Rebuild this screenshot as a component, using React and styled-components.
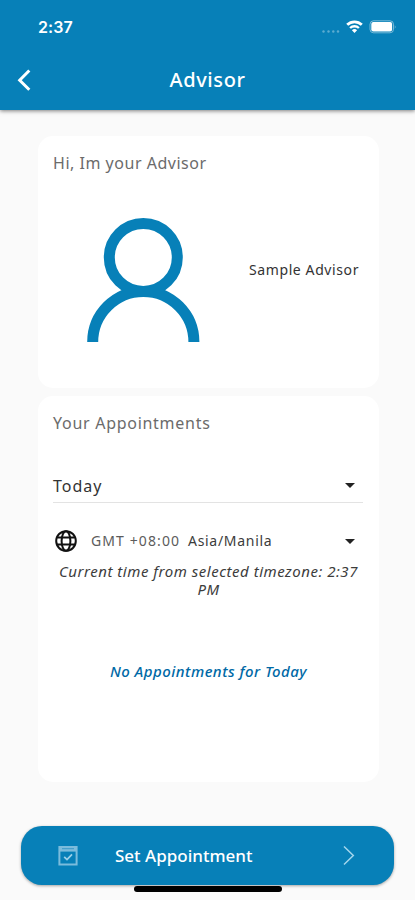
import React from "react";
import styled, { createGlobalStyle } from "styled-components";

const BLUE = "#0780b8";

const GlobalStyle = createGlobalStyle`
  * { box-sizing: border-box; }
  html, body { margin: 0; padding: 0; }
  body { background: #fafafa; font-family: "Noto Sans", "Open Sans", sans-serif; overflow: hidden; }
`;

const Screen = styled.div`
  width: 415px;
  height: 900px;
  display: flex;
  flex-direction: column;
  background: #fafafa;
`;

const Header = styled.header`
  height: 110px;
  flex: none;
  background: ${BLUE};
  color: #fff;
  box-shadow: 0 1px 4px rgba(0, 0, 0, 0.5);
`;

const StatusBar = styled.div`
  height: 53px;
  padding: 0 18px 0 38px;
  display: flex;
  align-items: center;
  justify-content: space-between;
`;

const Clock = styled.span`
  font: 600 16px/20px "Inter", sans-serif;
  letter-spacing: ${(p) => p.$spacing};
`;

const StatusIcons = styled.svg`
  display: block;
  width: 76px;
  height: 20px;
`;

const NavBar = styled.div`
  height: 54px;
  display: grid;
  grid-template-columns: 48px 1fr 48px;
  align-items: center;
`;

const BackButton = styled.button`
  border: 0;
  background: none;
  padding: 0 0 0 16px;
  height: 24px;
`;

const Icon = styled.svg`
  display: block;
  flex: none;
  width: ${(p) => p.$w}px;
  height: ${(p) => p.$h}px;
`;

const Title = styled.h1`
  margin: 0;
  text-align: center;
  font-size: 20px;
  line-height: 28px;
  font-weight: 500;
  letter-spacing: ${(p) => p.$spacing};
`;

const Content = styled.main`
  padding: 26px 36px 0 38px;
  display: flex;
  flex-direction: column;
  gap: 8px;
`;

const Card = styled.section`
  height: ${(p) => p.$height}px;
  padding: 16px 16px 0;
  background: #fff;
  border-radius: 15px;
`;

const CardTitle = styled.h2`
  margin: 0 0 0 -1px;
  color: #6b6b6b;
  font-size: 16px;
  line-height: 22px;
  font-weight: 400;
  letter-spacing: ${(p) => p.$spacing};
`;

const Profile = styled.div`
  margin-top: 43px;
  padding-left: 33px;
  display: flex;
  align-items: flex-start;
`;

const AdvisorName = styled.span`
  margin: 43px 0 0 49px;
  color: #333;
  font-size: 14px;
  line-height: 20px;
  white-space: nowrap;
  letter-spacing: ${(p) => p.$spacing};
`;

const DaySelect = styled.div`
  margin: 34px 0 0 -1px;
  height: 35px;
  padding: 1px 8px 0 0;
  border-bottom: 1px solid #e3e3e3;
  display: flex;
  align-items: center;
  justify-content: space-between;
  color: #333;
  font-size: 16px;
  letter-spacing: ${(p) => p.$spacing};
`;

const ZoneSelect = styled.div`
  margin-top: 26px;
  height: 24px;
  padding: 0 8px 0 1px;
  display: flex;
  align-items: center;
`;

const ZoneText = styled.span`
  margin-left: ${(p) => p.$left}px;
  width: ${(p) => p.$width}px;
  color: ${(p) => p.$color};
  font-size: 14px;
  line-height: 20px;
  white-space: nowrap;
  letter-spacing: ${(p) => p.$spacing};
`;

const Spacer = styled.span`
  flex: 1;
`;

const CurrentTime = styled.p`
  margin: 9px 0 0;
  color: #3c3c3c;
  font-size: 15px;
  line-height: 18px;
  font-style: italic;
  text-align: center;
  letter-spacing: ${(p) => p.$spacing};
`;

const EmptyMessage = styled.p`
  margin: 63px 0 0;
  color: #0069a6;
  font-size: 15px;
  line-height: 20px;
  font-style: italic;
  font-weight: 500;
  text-align: center;
  letter-spacing: ${(p) => p.$spacing};
`;

const Footer = styled.footer`
  margin-top: 44px;
  padding: 0 21px;
  display: flex;
  flex-direction: column;
  align-items: center;
`;

const PrimaryButton = styled.button`
  width: 373px;
  height: 59px;
  padding: 0 39px 0 37px;
  border: 0;
  border-radius: 21px;
  background: ${BLUE};
  color: #fff;
  box-shadow: 0 1px 3px rgba(0, 0, 0, 0.35);
  display: flex;
  align-items: center;
  font-family: inherit;
`;

const ButtonLabel = styled.span`
  margin-left: 37px;
  flex: 1;
  text-align: left;
  font-size: 17px;
  font-weight: 500;
  letter-spacing: ${(p) => p.$spacing};
`;

const HomeIndicator = styled.div`
  margin: 1px 0 0 1px;
  width: 148px;
  height: 6px;
  border-radius: 3px;
  background: #000;
`;

const Caret = () => (
  <Icon $w={10} $h={5} viewBox="0 0 10 5">
    <path d="M0 0h10L5 5z" fill="#222" />
  </Icon>
);

export default function App() {
  return (
    <Screen>
      <GlobalStyle />
      <Header>
        <StatusBar>
          <Clock $spacing="0.1px">2:37</Clock>
          <StatusIcons viewBox="0 0 76 20">
            <g fill="#fff" fillOpacity="0.35">
              <circle cx="2.5" cy="14.5" r="1.2" />
              <circle cx="7.5" cy="14.5" r="1.2" />
              <circle cx="12.3" cy="14.5" r="1.2" />
              <circle cx="17" cy="14.5" r="1.2" />
            </g>
            <g transform="translate(25 3)">
              <path d="M1.2 4.8a10.5 10.5 0 0 1 14.6 0" fill="none" stroke="#fff" strokeWidth="2.8" />
              <path d="M4.1 8a6.4 6.4 0 0 1 8.8 0" fill="none" stroke="#fff" strokeWidth="2.4" />
              <path d="M5.9 10.2a3.8 3.8 0 0 1 5.2 0L8.5 13z" fill="#fff" />
            </g>
            <rect x="49" y="3.8" width="23.5" height="12" rx="3.5" fill="none" stroke="#fff" strokeOpacity="0.45" />
            <rect x="50.3" y="5" width="20.8" height="9.6" rx="2" fill="#fff" />
            <path d="M73.8 8q1.6 2 0 4z" fill="#fff" fillOpacity="0.5" />
          </StatusIcons>
        </StatusBar>
        <NavBar>
          <BackButton aria-label="Back">
            <Icon $w={16} $h={24} viewBox="0 0 16 24">
              <path d="M13.3 2.5L3.7 12.2l9.6 9.5" fill="none" stroke="#fff" strokeWidth="3" />
            </Icon>
          </BackButton>
          <Title $spacing="0.6px">Advisor</Title>
        </NavBar>
      </Header>

      <Content>
        <Card $height={252}>
          <CardTitle $spacing="0.52px">Hi, Im your Advisor</CardTitle>
          <Profile>
            <Icon $w={113} $h={126} viewBox="0 0 113 126">
              <g fill="none" stroke={BLUE} strokeWidth="11">
                <circle cx="56.3" cy="40.4" r="34" />
                <path d="M5.7 125a50.6 50.6 0 0 1 101.2 0" />
              </g>
            </Icon>
            <AdvisorName $spacing="0.6px">Sample Advisor</AdvisorName>
          </Profile>
        </Card>

        <Card $height={386}>
          <CardTitle $spacing="0.72px">Your Appointments</CardTitle>
          <DaySelect $spacing="1px">
            Today
            <Caret />
          </DaySelect>
          <ZoneSelect>
            <Icon $w={22} $h={22} viewBox="0 0 22 22">
              <g fill="none" stroke="#111" strokeWidth="2">
                <circle cx="11" cy="11" r="9.8" />
                <ellipse cx="11" cy="11" rx="4.4" ry="9.8" />
                <path d="M2 7.6h18M2 14.4h18" />
              </g>
            </Icon>
            <ZoneText $left={14} $width={97} $color="#5c5c5c" $spacing="1.1px">GMT +08:00</ZoneText>
            <ZoneText $left={0} $width={90} $color="#3c3c3c" $spacing="0.7px">Asia/Manila</ZoneText>
            <Spacer />
            <Caret />
          </ZoneSelect>
          <CurrentTime $spacing="0.52px">
            Current time from selected timezone: 2:37 PM
          </CurrentTime>
          <EmptyMessage $spacing="0.48px">No Appointments for Today</EmptyMessage>
        </Card>
      </Content>

      <Footer>
        <PrimaryButton>
          <Icon $w={20} $h={20} viewBox="0 0 20 20">
            <path d="M1.4 1h17.2v17.6H1.4z" fill="none" stroke="#7bbcdc" strokeWidth="2" />
            <path d="M1 1h18v4.6H1z" fill="#7bbcdc" />
            <path d="M4 2.7h12" stroke="#3a9ac8" strokeWidth="1" />
            <path d="M6.2 10.9l2.8 2.7 5-5.2" fill="none" stroke="#9bd0e8" strokeWidth="1.8" />
          </Icon>
          <ButtonLabel $spacing="0px">Set Appointment</ButtonLabel>
          <Icon $w={12} $h={20} viewBox="0 0 12 20">
            <path d="M1 0.5l9.3 9L1 18.5" fill="none" stroke="#a3d5ec" strokeWidth="1.5" />
          </Icon>
        </PrimaryButton>
        <HomeIndicator />
      </Footer>
    </Screen>
  );
}
